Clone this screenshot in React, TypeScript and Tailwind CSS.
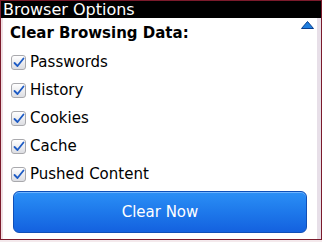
import React from "react";

const items = ["Passwords", "History", "Cookies", "Cache", "Pushed Content"];

function Check() {
  return (
    <span className="flex h-[15px] w-[15px] items-center justify-center rounded-[3px] border border-[#a9a9ad] bg-gradient-to-b from-[#ffffff] to-[#dcdde2]">
      <svg width="12" height="11" viewBox="0 0 12 11">
        <path d="M1.5 6 L4.5 9 L10.5 1.5" fill="none" stroke="#1d5bc4" strokeWidth="1.8" strokeLinecap="round" strokeLinejoin="round" />
      </svg>
    </span>
  );
}

export default function App() {
  return (
    <div className="h-[242px] w-[322px] bg-[#f4e9ec]">
      <div className="flex h-[240px] w-[322px] flex-col border-[#7b1b2c] border-t border-x border-b bg-white font-['DejaVu_Sans',sans-serif] text-[15px] text-black">
        <div className="h-[17px] shrink-0 bg-black pl-[2px] text-[16px] leading-[17px] text-white">Browser Options</div>
        <div className="flex min-h-0 flex-1">
          <div className="w-[2px] bg-[#f1dfe3]" />
          <div className="relative flex flex-1 flex-col">
            <div className="pl-[7px] pt-[6px] font-bold leading-[18px]">Clear Browsing Data:</div>
            <div className="mt-[6px] flex flex-col">
              {items.map((t) => (
                <div key={t} className="flex h-[28px] items-center gap-[4px] pl-[8px]">
                  <Check />
                  <span className="leading-[18px]">{t}</span>
                </div>
              ))}
            </div>
            <button className="mx-[10px] mt-[3px] flex h-[42px] items-center justify-center rounded-[6px] border border-[#0f4fb8] bg-gradient-to-b from-[#2b8ff6] to-[#1461df] text-white shadow-[inset_0_1px_0_#6fb4ff]">
              Clear Now
            </button>
            <svg className="absolute right-[3px] top-[3px]" width="13" height="8" viewBox="0 0 13 8">
              <path d="M6.5 0.5 L12.5 7.5 L0.5 7.5 Z" fill="#1f7fe0" stroke="#0b3f8f" strokeWidth="1" />
            </svg>
          </div>
          <div className="w-[4px] bg-[#e7dfe8]" />
        </div>
      </div>
    </div>
  );
}
